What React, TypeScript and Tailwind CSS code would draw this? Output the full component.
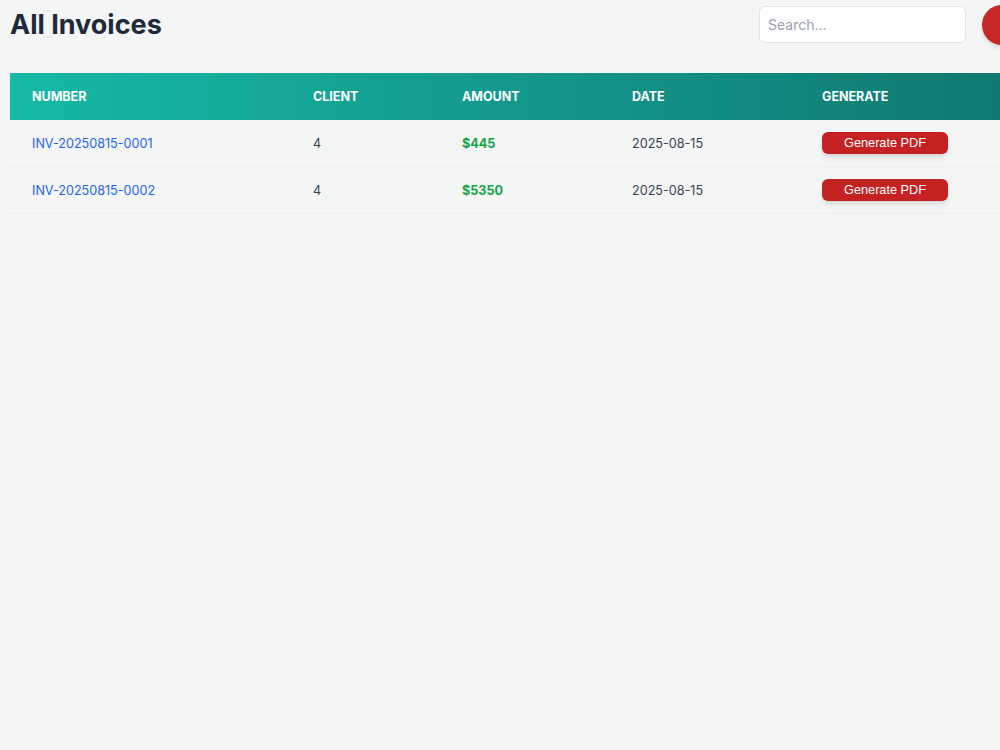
const invoices = [
  { number: 'INV-20250815-0001', client: '4', amount: 445, date: '2025-08-15' },
  { number: 'INV-20250815-0002', client: '4', amount: 5350, date: '2025-08-15' },
];

export default function App() {
  return (
    <div className="min-h-screen w-full overflow-hidden bg-[#f4f5f5]" style={{ fontFamily: 'Inter, "Noto Sans", sans-serif' }}>
      <div className="w-[1032px] px-[10px]">
        {/* Header */}
        <div className="flex h-[49px] items-center justify-between">
          <h1 className="text-[27px] font-bold leading-none text-[#1e293b]">All Invoices</h1>
          <div className="flex items-center gap-4">
            <input
              type="text"
              placeholder="Search..."
              className="h-[37px] w-[207px] rounded-md border border-[#e2e4e6] bg-white px-2 text-sm text-gray-700 placeholder:text-gray-400 outline-none"
            />
            <button className="h-10 w-10 rounded-full bg-[#c62828] shadow-md" aria-label="Add" />
          </div>
        </div>

        {/* Table */}
        <div className="mt-[24px]">
          <div className="flex h-[47px] items-center bg-gradient-to-r from-[#16b9a5] to-[#0f7870] pt-[2px] text-[12.5px] font-bold uppercase text-white">
            <div className="w-[303px] px-[22px]">Number</div>
            <div className="w-[149px]">Client</div>
            <div className="w-[170px]">Amount</div>
            <div className="w-[190px]">Date</div>
            <div className="flex-1">Generate</div>
          </div>
          {invoices.map(inv => (
            <div key={inv.number} className="flex h-[47px] items-center border-b border-[#eceeee] text-[12.6px]">
              <div className="w-[303px] px-[22px] pt-[3px] text-[#2563eb]">{inv.number}</div>
              <div className="w-[149px] pt-[3px] text-[#374151]">{inv.client}</div>
              <div className="w-[170px] pt-[3px] font-bold text-[#16a34a]">${inv.amount}</div>
              <div className="w-[190px] pt-[3px] text-[#374151]">{inv.date}</div>
              <div className="flex-1">
                <button
                  className="h-[22px] w-[126px] rounded-md bg-[#c42222] pt-px text-[12.7px] text-white shadow-md"
                  style={{ fontFamily: '"Liberation Sans", Arial, sans-serif' }}
                >
                  Generate PDF
                </button>
              </div>
            </div>
          ))}
        </div>
      </div>
    </div>
  );
}
